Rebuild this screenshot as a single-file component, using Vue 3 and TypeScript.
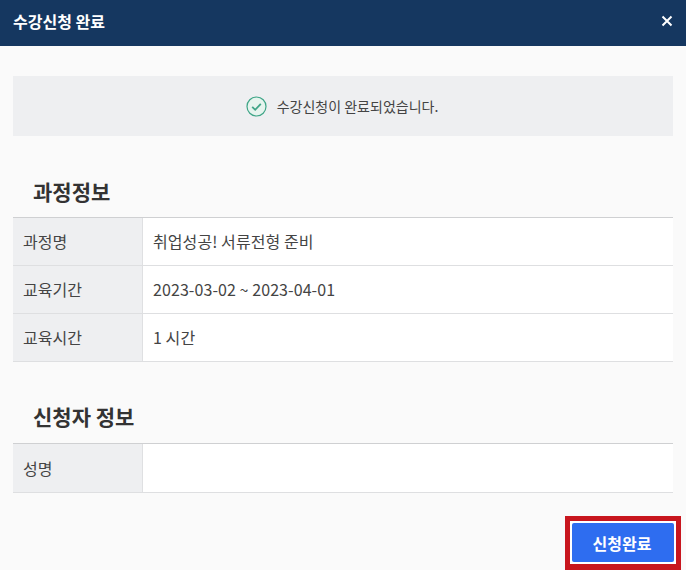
<script setup lang="ts">
const course = [
  { label: '과정명', value: '취업성공! 서류전형 준비' },
  { label: '교육기간', value: '2023-03-02 ~ 2023-04-01' },
  { label: '교육시간', value: '1 시간' },
]
const applicant = [{ label: '성명', value: '' }]
</script>

<template>
  <div class="modal">
    <header class="head">
      <h1>수강신청 완료</h1>
      <svg class="close" width="12" height="12" viewBox="0 0 12 12" aria-label="닫기">
        <path d="M1.5 1.5l9 9M10.5 1.5l-9 9" stroke="#fff" stroke-width="2" fill="none" />
      </svg>
    </header>
    <main class="body">
      <div class="notice">
        <svg width="21" height="21" viewBox="0 0 21 21">
          <circle cx="10.5" cy="10.5" r="9.5" fill="#e6f4ee" stroke="#3fa587" stroke-width="1.2" />
          <path d="M6.2 10.8l3 3 5.6-6" fill="none" stroke="#3fa587" stroke-width="1.8" />
        </svg>
        <span>수강신청이 완료되었습니다.</span>
      </div>

      <h2 class="first">과정정보</h2>
      <div class="table">
        <div v-for="r in course" :key="r.label" class="row">
          <div class="th">{{ r.label }}</div>
          <div class="td">{{ r.value }}</div>
        </div>
      </div>

      <h2 class="second">신청자 정보</h2>
      <div class="table">
        <div v-for="r in applicant" :key="r.label" class="row tall">
          <div class="th">{{ r.label }}</div>
          <div class="td">{{ r.value }}</div>
        </div>
      </div>

      <footer class="foot">
        <div class="mark">
          <button class="done" type="button">신청완료</button>
        </div>
      </footer>
    </main>
  </div>
</template>

<style>
html, body { margin: 0; background: #fafafa; }
</style>

<style scoped>
.modal {
  width: 686px;
  height: 570px;
  overflow: hidden;
  background: #fafafa;
  font-family: "Noto Sans CJK KR", "Noto Sans", sans-serif;
  color: #333;
  display: flex;
  flex-direction: column;
}
.head {
  height: 46px;
  flex: none;
  background: #153760;
  display: flex;
  align-items: center;
  justify-content: space-between;
  padding: 0 13px 5px;
  box-sizing: border-box;
}
.head h1 {
  margin: 0;
  font-size: 16px;
  font-weight: 700;
  color: #fff;
}
.body {
  flex: 1;
  padding: 30px 13px 0;
  display: flex;
  flex-direction: column;
}
.notice {
  height: 60px;
  flex: none;
  background: #eeeff1;
  display: flex;
  align-items: center;
  justify-content: center;
  gap: 10px;
  padding-right: 2px;
  box-sizing: border-box;
  font-size: 14px;
  color: #444;
}
h2 {
  margin: 0;
  font-size: 21px;
  font-weight: 700;
  color: #333;
  padding-left: 20px;
  line-height: 28px;
}
h2.first { margin-top: 41px; margin-bottom: 12px; }
h2.second { margin-top: 40px; margin-bottom: 13px; }
.table { border-top: 1px solid #cfd0d2; }
.row {
  display: flex;
  height: 47px;
  border-bottom: 1px solid #dedfe1;
}
.row.tall { height: 48px; }
.th {
  width: 130px;
  flex: none;
  background: #eeeff1;
  border-right: 1px solid #dfe0e2;
  box-sizing: border-box;
  padding: 0 0 1px 10px;
  display: flex;
  align-items: center;
  font-size: 16px;
  color: #444;
}
.td {
  flex: 1;
  background: #fff;
  padding: 0 0 1px 10px;
  display: flex;
  align-items: center;
  font-size: 16px;
  letter-spacing: 0.08px;
  color: #444;
}
.foot {
  display: flex;
  justify-content: flex-end;
  margin-top: 23px;
  margin-right: -8px;
}
.mark {
  width: 116px;
  height: 54px;
  box-sizing: border-box;
  border: 5px solid #c8161e;
  border-bottom-width: 6px;
  background: #fff;
  padding: 2px;
  display: flex;
}
.done {
  flex: 1;
  background: #2e6df0;
  color: #fff;
  font: 700 16px "Noto Sans CJK KR", sans-serif;
  border: 0;
  border-radius: 2px;
  padding: 0 2px 0 0;
}
</style>
